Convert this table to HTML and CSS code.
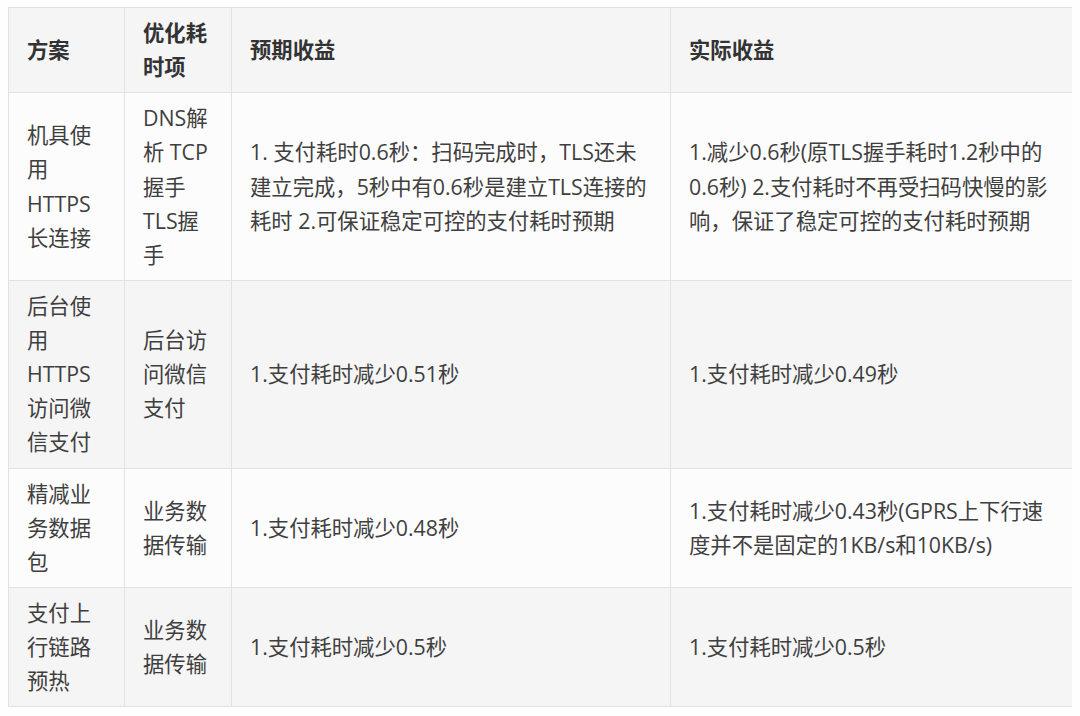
FILE: index.html
```html
<!DOCTYPE html>
<html lang="zh-CN">
<head>
<meta charset="utf-8">
<title>优化方案</title>
<link rel="stylesheet" href="styles.css">
</head>
<body>
<table class="plan">
  <colgroup>
    <col class="c1"><col class="c2"><col class="c3"><col class="c4">
  </colgroup>
  <thead>
    <tr><th>方案</th><th>优化耗时项</th><th>预期收益</th><th>实际收益</th></tr>
  </thead>
  <tbody>
    <tr>
      <td>机具使用HTTPS长连接</td>
      <td>DNS解析 TCP握手 TLS握手</td>
      <td>1. 支付耗时0.6秒：扫码完成时，TLS还未建立完成，5秒中有0.6秒是建立TLS连接的耗时 2.可保证稳定可控的支付耗时预期</td>
      <td>1.减少0.6秒(原TLS握手耗时1.2秒中的0.6秒) 2.支付耗时不再受扫码快慢的影响，保证了稳定可控的支付耗时预期</td>
    </tr>
    <tr>
      <td>后台使用HTTPS访问微信支付</td>
      <td>后台访问微信支付</td>
      <td>1.支付耗时减少0.51秒</td>
      <td>1.支付耗时减少0.49秒</td>
    </tr>
    <tr>
      <td>精减业务数据包</td>
      <td>业务数据传输</td>
      <td>1.支付耗时减少0.48秒</td>
      <td>1.支付耗时减少0.43秒(GPRS上下行速度并不是固定的1KB/s和10KB/s)</td>
    </tr>
    <tr>
      <td>支付上行链路预热</td>
      <td>业务数据传输</td>
      <td>1.支付耗时减少0.5秒</td>
      <td>1.支付耗时减少0.5秒</td>
    </tr>
  </tbody>
</table>
</body>
</html>
```
FILE: styles.css
```css
html, body {
  background: #fefefe;
}
body {
  margin: 7px 8px;
  font-family: "Open Sans", "Noto Sans CJK SC", sans-serif;
  font-size: 21.33px;
  line-height: 1.6;
  color: #3f3f3f;
}
.plan {
  table-layout: fixed;
  width: 1065px;
  border-collapse: collapse;
}
.c1 { width: 116px; }
.c2 { width: 107px; }
.c3 { width: 439px; }
.c4 { width: 403px; }
.plan th, .plan td {
  border: 1px solid #e2e2e2;
  padding: 8px 18px;
  vertical-align: middle;
  text-align: left;
  word-break: normal;
}
.plan th {
  font-weight: 700;
  color: #333;
  background: #f5f5f5;
}
.plan tbody tr:nth-child(odd) td {
  background: #fcfcfc;
}
.plan tbody tr:nth-child(even) td {
  background: #f5f5f5;
}
```
